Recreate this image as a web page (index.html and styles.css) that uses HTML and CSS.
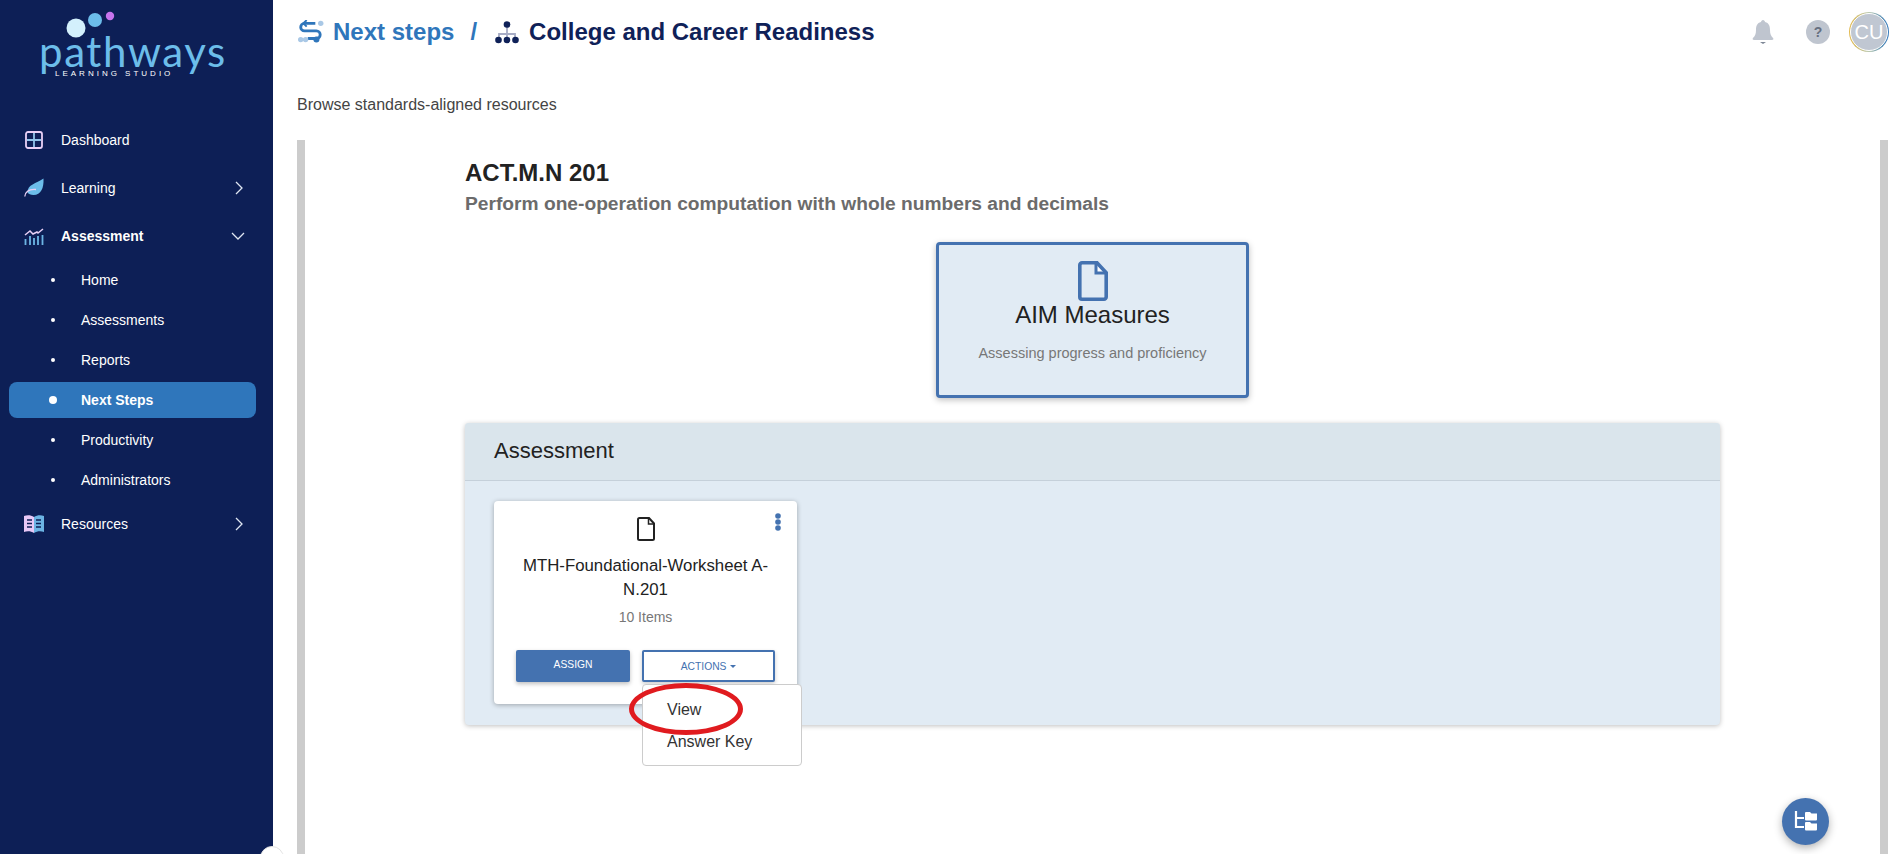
FILE: index.html
```html
<!DOCTYPE html>
<html lang="en">
  <head>
    <meta charset="UTF-8" />
    <title>Next steps</title>
    <link rel="stylesheet" href="styles.css">
  </head>
  <body>
    <aside class="sidebar">
      <div class="logo">
        <svg class="logo-dots" width="120" height="40" viewBox="0 0 120 40">
          <circle cx="76" cy="28" r="9.5" fill="#d3f0fc" />
          <circle cx="95" cy="20" r="7" fill="#6cbdea" />
          <circle cx="110" cy="16" r="4.2" fill="#c774ee" />
        </svg>
        <div class="logo-name">pathways</div>
        <div class="logo-sub">LEARNING STUDIO</div>
      </div>

      <nav class="nav">
        <a class="nav-item">
          <svg class="nav-icon" width="20" height="20" viewBox="0 0 20 20">
            <rect x="2" y="2" width="16" height="16" rx="2" fill="none" stroke="#e8d0f6" stroke-width="1.8" />
            <path d="M10 3v14M3 10h14" fill="none" stroke="#8fc4ea" stroke-width="1.8" />
          </svg>
          <span>Dashboard</span>
        </a>
        <a class="nav-item">
          <svg class="nav-icon" width="20" height="20" viewBox="0 0 20 20">
            <path d="M19.5 0.5C20 10 17 17 9.500 17C6.500 17 4.500 16 3.500 14.500C3.500 6 12 6 19.500 0.500Z" fill="#6cbdea" />
            <path d="M0.800 18.500C1.500 13 6 11 12 11.500" fill="none" stroke="#e8d0f6" stroke-width="1.300" />
          </svg>
          <span>Learning</span>
          <svg class="chev" width="12" height="14" viewBox="0 0 12 14">
            <path d="M3 1l6 6-6 6" fill="none" stroke="#dfe6f2" stroke-width="1.300" />
          </svg>
        </a>
        <a class="nav-item is-open">
          <svg class="nav-icon" width="20" height="20" viewBox="0 0 20 20">
            <path d="M1 9l5-4 3 3 4-2 1 1 5-4" fill="none" stroke="#e8d0f6" stroke-width="1.500" />
            <path d="M1.500 13v6M6 10v9M10 12v7M14 10v9M18.500 9v10" fill="none" stroke="#6cb4e4" stroke-width="1.800" />
          </svg>
          <span>Assessment</span>
          <svg class="chev" width="14" height="12" viewBox="0 0 14 12">
            <path d="M1 3l6 6 6-6" fill="none" stroke="#dfe6f2" stroke-width="1.300" />
          </svg>
        </a>
        <ul class="subnav">
          <li class="sub-item">Home</li>
          <li class="sub-item">Assessments</li>
          <li class="sub-item">Reports</li>
          <li class="sub-item active">Next Steps</li>
          <li class="sub-item">Productivity</li>
          <li class="sub-item">Administrators</li>
        </ul>
        <a class="nav-item">
          <svg class="nav-icon" width="20" height="20" viewBox="0 0 20 20">
            <path d="M0 2c3-1 7-1 10 1v16c-3-2-7-2-10-1z" fill="#e8c8f6" />
            <path d="M10 3c3-2 7-2 10-1v16c-3-1-7-1-10 1z" fill="#6cb4e4" />
            <path d="M3 6h5M3 9.500h5M3 13h5M12 6h5M12 9.500h5M12 13h5" stroke="#0d1f56" stroke-width="1.400" />
          </svg>
          <span>Resources</span>
          <svg class="chev" width="12" height="14" viewBox="0 0 12 14">
            <path d="M3 1l6 6-6 6" fill="none" stroke="#dfe6f2" stroke-width="1.300" />
          </svg>
        </a>
      </nav>
    </aside>
    <div class="collapse-knob"></div>

    <main class="main">
      <header class="topbar">
        <div class="crumbs">
          <svg width="26" height="24" viewBox="0 0 24 22">
            <path d="M16 3H6a3.500 3.500 0 0 0 0 7h11a3.500 3.500 0 0 1 0 7H9" fill="none" stroke="#2f76bb" stroke-width="2.600" />
            <path d="M8 0l-3 3 3 3" fill="none" stroke="#2f76bb" stroke-width="1.800" />
            <circle cx="21" cy="3" r="2.500" fill="#a9c8e6" />
            <circle cx="2.500" cy="18" r="2.500" fill="#a9c8e6" />
            <circle cx="7" cy="18" r="2.500" fill="#a9c8e6" />
            <circle cx="17" cy="18" r="2.800" fill="#2f76bb" />
          </svg>
          <span class="crumb-link">Next steps</span>
          <span class="crumb-sep">/</span>
          <svg width="24" height="23" viewBox="0 0 24 23">
            <path d="M12 6v6M4 18v-5h16v5M12 12v6" fill="none" stroke="#a6abc4" stroke-width="1.800" />
            <circle cx="12" cy="3.500" r="3.300" fill="#0f2158" />
            <circle cx="3.500" cy="19" r="3.300" fill="#0f2158" />
            <circle cx="12" cy="19" r="3.300" fill="#0f2158" />
            <circle cx="20.500" cy="19" r="3.300" fill="#0f2158" />
          </svg>
          <span class="crumb-title">College and Career Readiness</span>
        </div>
        <div class="top-actions">
          <svg width="22" height="24" viewBox="0 0 22 24">
            <path d="M11 0c1 0 2 1 2 2 4 1 5 4 5 8 0 4 1 6 3 8 1 1 0 2-1 2H2c-1 0-2-1-1-2 2-2 3-4 3-8 0-4 1-7 5-8 0-1 1-2 2-2z" fill="#bfc5cf" />
            <path d="M8 22h6l-3 2z" fill="#7d8696" />
          </svg>
          <div class="help">?</div>
          <div class="avatar"><span>CU</span></div>
        </div>
      </header>

      <p class="intro">Browse standards-aligned resources</p>

      <section class="frame">
        <h1 class="std-code">ACT.M.N 201</h1>
        <h2 class="std-desc">Perform one-operation computation with whole numbers and decimals</h2>

        <div class="aim-card">
          <svg width="30" height="40" viewBox="0 0 30 40">
            <path d="M19 2v10h9z" fill="#fff" />
            <path d="M4 1.800h15l9.200 10V36a2.200 2.200 0 0 1-2.200 2.200H4A2.200 2.200 0 0 1 1.800 36V4A2.200 2.200 0 0 1 4 1.800z" fill="none" stroke="#4472b0" stroke-width="3.600" />
            <path d="M18 2v10h10" fill="none" stroke="#4472b0" stroke-width="3" />
          </svg>
          <div class="aim-title">AIM Measures</div>
          <div class="aim-sub">Assessing progress and proficiency</div>
        </div>

        <div class="panel">
          <div class="panel-head">Assessment</div>
          <div class="panel-body">
            <div class="item-card">
              <svg class="kebab" width="6" height="18" viewBox="0 0 6 18">
                <circle cx="3" cy="3" r="2.800" fill="#4472b0" />
                <circle cx="3" cy="9" r="2.800" fill="#4472b0" />
                <circle cx="3" cy="15" r="2.800" fill="#4472b0" />
              </svg>
              <svg class="item-icon" width="18" height="24" viewBox="0 0 18 24">
                <path d="M2.500 1h9.500l5 5.500V21.500A1.500 1.500 0 0 1 15.500 23h-13A1.500 1.500 0 0 1 1 21.500v-19A1.500 1.500 0 0 1 2.500 1z" fill="none" stroke="#222" stroke-width="2" />
                <path d="M11.500 1.500v5.500h5.500" fill="none" stroke="#222" stroke-width="1.500" />
              </svg>
              <div class="item-title">MTH-Foundational-Worksheet A-N.201</div>
              <div class="item-count">10 Items</div>
              <div class="item-btns">
                <button class="btn-assign">ASSIGN</button>
                <button class="btn-actions">ACTIONS <i class="caret"></i></button>
              </div>
              <div class="menu">
                <div class="menu-row">View</div>
                <div class="menu-row">Answer Key</div>
              </div>
              <div class="red-ring"></div>
            </div>
          </div>
        </div>
      </section>

      <button class="fab">
        <svg width="24" height="22" viewBox="0 0 24 22">
          <path d="M2 1v16h8M2 8h8" fill="none" stroke="#fff" stroke-width="2.200" />
          <path d="M11 3a1 1 0 0 1 1-1h4l1.500 1.500H23v6a1 1 0 0 1-1 1H12a1 1 0 0 1-1-1zM11 13a1 1 0 0 1 1-1h4l1.500 1.500H23v6a1 1 0 0 1-1 1H12a1 1 0 0 1-1-1z" fill="#fff" />
        </svg>
      </button>
    </main>
  </body>
</html>
```

FILE: styles.css
```css
* {
  box-sizing: border-box;
}
html,
body {
  height: 100%;
}
body {
  display: flex;
  margin: 0;
  height: 854px;
  overflow: hidden;
  background-color: #fff;
  font-family: "Liberation Sans", Arial, sans-serif;
  color: #222;
}

/* sidebar */
.sidebar {
  flex: 0 0 273px;
  background-color: #0d1f56;
  color: #fff;
  font-size: 14px;
}
.logo {
  position: relative;
  height: 116px;
}
.logo-dots {
  position: absolute;
  top: 0;
  left: 0;
}
.logo-name {
  position: absolute;
  top: 33px;
  left: 39px;
  font-family: Lato, sans-serif;
  font-weight: 400;
  font-size: 42px;
  line-height: 36px;
  letter-spacing: 1.6px;
  color: #6cbdea;
}
.logo-sub {
  position: absolute;
  top: 70px;
  left: 55px;
  font-size: 8px;
  line-height: 8px;
  letter-spacing: 3px;
  white-space: nowrap;
}
.nav-item {
  display: flex;
  align-items: center;
  height: 48px;
  padding: 0 28px 0 24px;
}
.nav-item span {
  margin-left: 17px;
  flex: 1;
}
.is-open span {
  font-weight: bold;
}
.subnav {
  list-style: none;
  margin: 0;
  padding: 0;
}
.sub-item {
  position: relative;
  display: flex;
  align-items: center;
  height: 40px;
  margin-left: 9px;
  width: 247px;
  padding-left: 72px;
  border-radius: 8px;
}
.sub-item::before {
  content: "";
  position: absolute;
  left: 42px;
  top: 18px;
  width: 4px;
  height: 4px;
  border-radius: 50%;
  background-color: #fff;
}
.sub-item.active {
  height: 36px;
  margin-top: 2px;
  margin-bottom: 2px;
  background-color: #2f76bb;
  font-weight: bold;
}
.sub-item.active::before {
  left: 40px;
  top: 14px;
  width: 8px;
  height: 8px;
}
.collapse-knob {
  position: absolute;
  left: 260px;
  top: 846px;
  width: 24px;
  height: 24px;
  border-radius: 50%;
  background-color: #fff;
  border: 1px solid #e3e3e3;
}

/* main */
.main {
  position: relative;
  flex: 1;
  min-width: 0;
  padding-right: 6px;
  display: flex;
  flex-direction: column;
}
.topbar {
  display: flex;
  align-items: center;
  justify-content: space-between;
  height: 64px;
  padding-left: 25px;
}
.crumbs {
  display: flex;
  align-items: center;
  font-weight: bold;
  font-size: 24px;
}
.crumb-link {
  margin-left: 9px;
  color: #2f76bb;
}
.crumb-sep {
  margin: 0 18px 0 16px;
  color: #2f76bb;
}
.crumb-title {
  margin-left: 10px;
  color: #0f2158;
}
.top-actions {
  display: flex;
  align-items: center;
}
.help {
  width: 24px;
  height: 24px;
  margin-left: 32px;
  border-radius: 50%;
  background-color: #bfc5cf;
  color: #666f80;
  font-size: 14px;
  font-weight: bold;
  line-height: 24px;
  text-align: center;
}
.avatar {
  width: 40px;
  height: 40px;
  margin: 0 -1px 0 19px;
  padding: 1px;
  border-radius: 50%;
  background: linear-gradient(90deg, #e3b94c, #b8c8b0 50%, #2f76bb);
}
.avatar span {
  display: block;
  height: 100%;
  border-radius: 50%;
  border: 1px solid #fff;
  background-color: #c0c7d2;
  color: #fff;
  font-size: 20px;
  line-height: 36px;
  text-align: center;
}
.intro {
  margin: 33px 0 0 24px;
  font-size: 16px;
  line-height: 16px;
  color: #444;
}
.frame {
  flex: 1;
  margin: 27px 0 0 24px;
  padding: 0 160px;
  border-left: 8px solid #ccc;
  border-right: 8px solid #ccc;
}
.std-code {
  margin: 19px 0 0;
  font-size: 24px;
  line-height: 28px;
  color: #222;
}
.std-desc {
  margin: 5px 0 0;
  font-size: 19.2px;
  line-height: 24px;
  color: #6b6b6b;
}

/* AIM card */
.aim-card {
  display: flex;
  flex-direction: column;
  align-items: center;
  width: 313px;
  height: 156px;
  margin: 26px auto 0;
  padding-top: 16px;
  background-color: #e1ebf4;
  border: 3px solid #4472b0;
  border-radius: 4px;
  box-shadow: 0 2px 6px rgba(0, 0, 0, 0.25);
}
.aim-title {
  font-size: 24px;
  line-height: 28px;
}
.aim-sub {
  margin-top: 16px;
  font-size: 14.5px;
  line-height: 16px;
  color: #777;
}

/* assessment panel */
.panel {
  height: 302px;
  margin-top: 25px;
  border-radius: 4px;
  background-color: #e1ebf4;
  box-shadow: 0 1px 5px rgba(0, 0, 0, 0.25);
}
.panel-head {
  height: 58px;
  padding-left: 29px;
  background-color: #dae5ec;
  border-bottom: 1px solid #c5d0da;
  border-radius: 4px 4px 0 0;
  font-size: 22px;
  line-height: 56px;
}
.panel-body {
  padding: 20px 29px;
}
.item-card {
  position: relative;
  display: flex;
  flex-direction: column;
  align-items: center;
  width: 303px;
  height: 203px;
  padding: 16px 22px 0;
  background-color: #fff;
  border-radius: 4px;
  box-shadow: 0 1px 5px rgba(0, 0, 0, 0.3);
}
.kebab {
  position: absolute;
  top: 12px;
  right: 16px;
}
.item-title {
  margin-top: 13px;
  font-size: 16.8px;
  line-height: 24px;
  text-align: center;
  color: #222;
}
.item-count {
  margin-top: 7px;
  font-size: 14px;
  line-height: 16px;
  color: #777;
}
.item-btns {
  display: flex;
  justify-content: space-between;
  width: 259px;
  margin-top: 25px;
}
.item-btns button {
  height: 32px;
  font-family: inherit;
  font-size: 10.3px;
  border-radius: 2px;
}
.btn-assign {
  width: 114px;
  padding-bottom: 4px;
  background-color: #4472b0;
  border: none;
  color: #fff;
  box-shadow: 0 2px 4px rgba(0, 0, 0, 0.25);
}
.btn-actions {
  width: 133px;
  background-color: #fff;
  border: 2px solid #4472b0;
  color: #4472b0;
  box-shadow: 0 2px 4px rgba(0, 0, 0, 0.2);
}
.caret {
  display: inline-block;
  margin-left: 1px;
  vertical-align: 2px;
  border-top: 3px solid #4472b0;
  border-left: 3px solid transparent;
  border-right: 3px solid transparent;
}
.menu {
  position: absolute;
  left: 148px;
  top: 183px;
  width: 160px;
  height: 82px;
  padding-top: 9px;
  background-color: #fff;
  border: 1px solid #ccc;
  border-radius: 4px;
}
.menu-row {
  height: 32px;
  padding-left: 24px;
  font-size: 16px;
  line-height: 32px;
  color: #333;
}
.red-ring {
  position: absolute;
  left: 135px;
  top: 182px;
  width: 114px;
  height: 52px;
  border: 5px solid #e01b1f;
  border-radius: 50%;
}
.fab {
  position: absolute;
  left: 1509px;
  top: 798px;
  width: 47px;
  height: 47px;
  padding: 2px 0 0;
  background-color: #4472b0;
  border: none;
  border-radius: 50%;
  box-shadow: 0 3px 8px rgba(0, 0, 0, 0.3);
}
```
